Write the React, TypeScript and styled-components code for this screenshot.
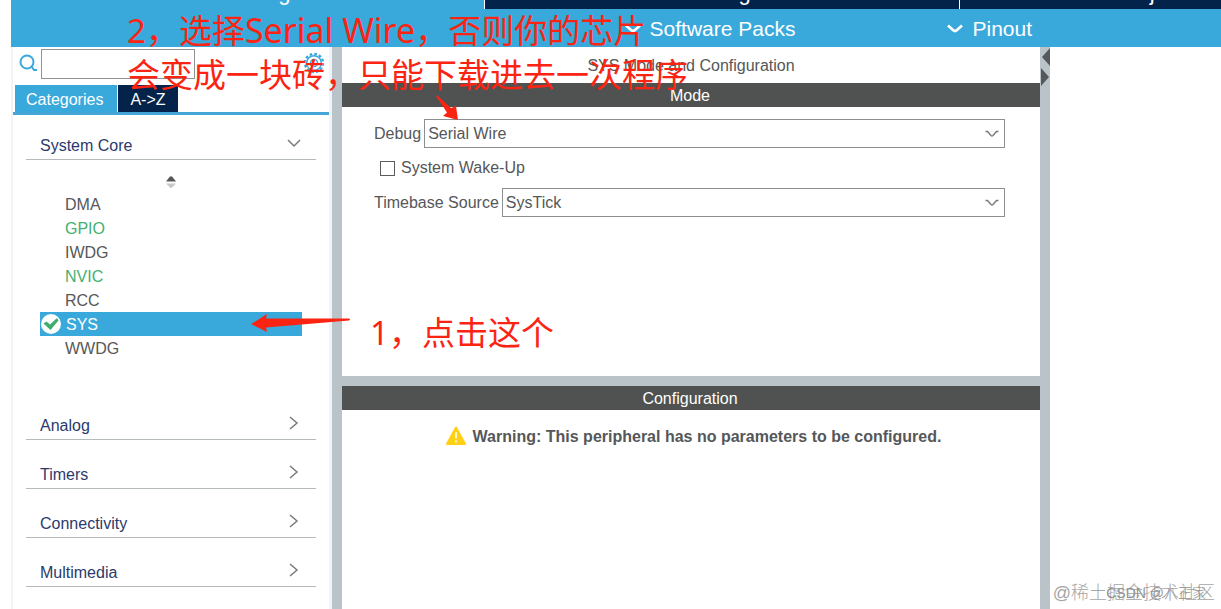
import React from "react";
import styled, { createGlobalStyle } from "styled-components";

const BLUE = "#39a9dc";
const NAVY = "#03234b";
const SPLIT = "#b9c3c8";
const BAR = "#4f5250";
const TEXT = "#555759";
const INK = "#2b3a6b";
const RED = "#fb2412";

const GlobalStyle = createGlobalStyle`
  *, *::before, *::after { box-sizing: border-box; }
  body {
    margin: 0;
    background: #fff;
    color: ${TEXT};
    font: 16px/20px "Liberation Sans", Arial, "Noto Sans CJK SC", sans-serif;
  }
  button, input, select { font: inherit; color: inherit; border-radius: 0; margin: 0; }
  button { border: 0; background: none; padding: 0; cursor: pointer; }
  svg { display: block; flex: none; }
`;

const Page = styled.div`
  position: relative;
  display: flex;
  flex-direction: column;
  min-height: 100vh;
  padding-left: 11px;
  overflow: hidden;
`;

const MainTabs = styled.div`
  display: flex;
  align-items: flex-end;
  height: 9px;
  overflow: hidden;
  background: ${NAVY};
`;

const MainTab = styled.button<{ $active?: boolean }>`
  flex: 0 0 39.2%;
  height: 40px;
  padding: 12px 0 4px;
  font-size: 22px;
  line-height: 24px;
  color: #fff;
  background: ${(p) => (p.$active ? BLUE : NAVY)};
  border-right: 1px solid #fff;
`;

const MenuBar = styled.div`
  display: flex;
  justify-content: flex-end;
  gap: 152px;
  height: 38px;
  padding: 2px 189px 0 0;
  background: ${BLUE};
`;

const MenuButton = styled.button`
  display: flex;
  align-items: center;
  gap: 9px;
  color: #fff;
  font-size: 21px;
  line-height: 24px;
`;

const Workspace = styled.div`
  display: flex;
  flex: 1;
`;

const Sidebar = styled.aside`
  flex: 0 0 321px;
  border-left: 2px solid #f3f3f5;
  border-right: 3px solid #f0f4fa;
`;

const SearchRow = styled.div`
  display: flex;
  align-items: flex-start;
  height: 38px;
  padding: 2px 4px 0 6px;
`;

const SearchIcon = styled.svg`
  margin: 5px 3px 0 0;
`;

const SearchInput = styled.input`
  width: 154px;
  height: 30px;
  border: 1px solid #8f9396;
  background: #fff;
`;

const IconButton = styled.button`
  margin: 3px 0 0 auto;
`;

const ViewTabs = styled.div`
  display: flex;
  gap: 1px;
  padding-left: 2px;
  border-bottom: 3px solid #45a5d6;
`;

const ViewTab = styled.button<{ $active?: boolean }>`
  height: 27px;
  padding: ${(p) => (p.$active ? "2px 14px 0 11px" : "2px 12px 0")};
  color: #fff;
  background: ${(p) => (p.$active ? BLUE : NAVY)};
`;

const Nav = styled.nav`
  display: grid;
  gap: 15px;
  padding: 11px 13px 0;
`;

const Section = styled.section``;

const SectionHeader = styled.button`
  display: flex;
  justify-content: space-between;
  align-items: flex-start;
  width: 100%;
  height: 34px;
  padding: 10px 15px 3px 14px;
  color: ${INK};
  border-bottom: 1px solid #b4b9bc;
`;

const SectionBody = styled.div`
  padding: 16px 14px 31px;
`;

const SortButton = styled.button`
  display: block;
  margin: 0 auto;
  padding: 0 0 4px;
`;

const List = styled.ul`
  list-style: none;
  margin: 0;
  padding: 0;
`;

const Peripheral = styled.button<{ $tone?: "green" | "selected" }>`
  display: flex;
  align-items: center;
  gap: 4px;
  width: 100%;
  height: 24px;
  padding: 2px 0 0 ${(p) => (p.$tone === "selected" ? 0 : 25)}px;
  color: ${(p) => (p.$tone === "selected" ? "#fff" : p.$tone === "green" ? "#43b072" : TEXT)};
  background: ${(p) => (p.$tone === "selected" ? BLUE : "transparent")};

  svg { margin-top: -3px; }
`;

const Splitter = styled.div`
  flex: 0 0 10px;
  background: ${SPLIT};
`;

const Center = styled.main`
  display: flex;
  flex-direction: column;
  flex: 698 1 0;
  min-width: 0;
`;

const RightPane = styled.div`
  flex: 171 1 0;
`;

const Title = styled.h1`
  margin: 0;
  padding: 9px 0 7px;
  font-size: 16px;
  font-weight: 400;
  text-align: center;
`;

const PanelBar = styled.h2`
  margin: 0;
  padding: 3px 2px 1px 0;
  font-size: 16px;
  font-weight: 400;
  text-align: center;
  color: #fff;
  background: ${BAR};
`;

const ModePanel = styled.section`
  min-height: 329px;
`;

const Form = styled.form`
  display: grid;
  gap: 10px;
  padding: 12px 35px 0 32px;
`;

const Field = styled.div`
  display: flex;
  align-items: center;
  gap: 3px;

  label { padding-top: 1px; }
`;

const CheckField = styled.label`
  display: flex;
  align-items: center;
  gap: 6px;
  padding-left: 6px;
  height: 20px;
`;

const Checkbox = styled.input`
  appearance: none;
  width: 15px;
  height: 15px;
  border: 1px solid #5c5c5c;
  background: #fff;
`;

const SelectWrap = styled.div`
  position: relative;
  flex: 1;

  svg {
    position: absolute;
    right: 6px;
    top: 11px;
    pointer-events: none;
  }
`;

const Select = styled.select`
  appearance: none;
  display: block;
  width: 100%;
  height: 29px;
  padding: 1px 24px 0 3px;
  border: 1px solid #8b8f92;
  background: #fff;
`;

const Warning = styled.p`
  display: flex;
  justify-content: center;
  align-items: center;
  gap: 6px;
  margin: 0;
  padding: 17px 0 0 4px;
  font-weight: 700;

  svg { margin-top: -3px; }
`;

const Note = styled.p<{ $x: number; $y: number }>`
  position: absolute;
  left: ${(p) => p.$x}px;
  top: ${(p) => p.$y}px;
  margin: 0;
  color: ${RED};
  font: 33px/44px "Noto Sans", "Noto Sans CJK SC", sans-serif;
  white-space: nowrap;
  pointer-events: none;
`;

const Latin = styled.span`
  font-size: 34px;
  line-height: 1;
`;

const Arrow = styled.svg<{ $x: number; $y: number }>`
  position: absolute;
  left: ${(p) => p.$x}px;
  top: ${(p) => p.$y}px;
  pointer-events: none;
`;

const Watermark = styled.span<{ $small?: boolean }>`
  position: absolute;
  right: ${(p) => (p.$small ? 15 : 6)}px;
  bottom: 5px;
  color: ${(p) => (p.$small ? "#929292" : "#a6a6a6")};
  font: 300 ${(p) => (p.$small ? 14 : 18)}px/22px "Liberation Sans", "Noto Sans CJK SC", sans-serif;
  white-space: nowrap;
  pointer-events: none;
`;

const MenuChevron = () => (
  <svg width="16" height="10" viewBox="0 0 16 10" fill="none" stroke="#fff" strokeWidth="2.6">
    <path d="M1 1.5 L6 6 Q8 8 10 6 L15 1.5" />
  </svg>
);

const ChevronDown = () => (
  <svg width="14" height="9" viewBox="0 0 14 9" fill="none" stroke="#77797b" strokeWidth="1.4">
    <path d="M0.500 1.500 H2.500 L6 5.500 Q7 6.500 8 5.500 L11.500 1.500 H13.500" />
  </svg>
);

const HeaderDown = () => (
  <svg width="14" height="14" viewBox="0 0 14 14" fill="none" stroke="#77797b" strokeWidth="1.5">
    <path d="M1 4 L7 10 L13 4" />
  </svg>
);

const HeaderRight = () => (
  <svg width="14" height="14" viewBox="0 0 14 14" fill="none" stroke="#77797b" strokeWidth="1.5">
    <path d="M3 1 L10 7 L3 13" />
  </svg>
);

const Gear = () => (
  <svg width="22" height="22" viewBox="0 0 22 22" fill="none" stroke={BLUE}>
    <circle cx="11" cy="11" r="9" strokeWidth="2.400" strokeDasharray="2.700 2.012" />
    <circle cx="11" cy="11" r="7.300" strokeWidth="1.400" />
    <circle cx="11" cy="11" r="3.500" strokeWidth="1.400" />
  </svg>
);

const items: { name: string; tone?: "green" | "selected" }[] = [
  { name: "DMA" },
  { name: "GPIO", tone: "green" },
  { name: "IWDG" },
  { name: "NVIC", tone: "green" },
  { name: "RCC" },
  { name: "SYS", tone: "selected" },
  { name: "WWDG" },
];

export default function App() {
  return (
    <Page>
      <GlobalStyle />
      <MainTabs>
        <MainTab $active>Pinout &amp; Configuration</MainTab>
        <MainTab>Clock Configuration</MainTab>
        <MainTab>Project Manager</MainTab>
      </MainTabs>
      <MenuBar>
        <MenuButton><MenuChevron />Software Packs</MenuButton>
        <MenuButton><MenuChevron />Pinout</MenuButton>
      </MenuBar>
      <Workspace>
        <Sidebar>
          <SearchRow>
            <SearchIcon width="19" height="19" viewBox="0 0 19 19" fill="none" stroke={BLUE} strokeWidth="2">
              <circle cx="8" cy="8" r="6.500" />
              <path d="M12.500 12.500 L15 16 H18" />
            </SearchIcon>
            <SearchInput aria-label="Search" />
            <IconButton aria-label="Settings"><Gear /></IconButton>
          </SearchRow>
          <ViewTabs>
            <ViewTab $active>Categories</ViewTab>
            <ViewTab>A-&gt;Z</ViewTab>
          </ViewTabs>
          <Nav>
            <Section>
              <SectionHeader>System Core<HeaderDown /></SectionHeader>
              <SectionBody>
                <SortButton aria-label="Sort">
                  <svg width="12" height="12" viewBox="0 0 12 12">
                    <path d="M1 5.500 L4.500 1 Q6 -0.500 7.500 1 L11 5.500 Z" fill="#55585a" />
                    <path d="M1 7.500 L6 12.500 L11 7.500 Z" fill="#c8c8c8" />
                  </svg>
                </SortButton>
                <List>
                  {items.map((i) => (
                    <li key={i.name}>
                      <Peripheral $tone={i.tone}>
                        {i.tone === "selected" && (
                          <svg width="22" height="22" viewBox="0 0 22 22">
                            <circle cx="11" cy="11" r="10" fill="#fff" />
                            <path d="M3.500 10.500 L6.500 8.500 L10 11.500 L17 5 L18.500 7.500 L10.500 17 Z" fill="#3fae6a" />
                          </svg>
                        )}
                        {i.name}
                      </Peripheral>
                    </li>
                  ))}
                </List>
              </SectionBody>
            </Section>
            {["Analog", "Timers", "Connectivity", "Multimedia"].map((name) => (
              <Section key={name}>
                <SectionHeader>{name}<HeaderRight /></SectionHeader>
              </Section>
            ))}
          </Nav>
        </Sidebar>
        <Splitter />
        <Center>
          <ModePanel>
            <Title>SYS Mode and Configuration</Title>
            <PanelBar>Mode</PanelBar>
            <Form>
              <Field>
                <label htmlFor="debug">Debug</label>
                <SelectWrap>
                  <Select id="debug"><option>Serial Wire</option></Select>
                  <ChevronDown />
                </SelectWrap>
              </Field>
              <CheckField><Checkbox type="checkbox" />System Wake-Up</CheckField>
              <Field>
                <label htmlFor="timebase">Timebase Source</label>
                <SelectWrap>
                  <Select id="timebase"><option>SysTick</option></Select>
                  <ChevronDown />
                </SelectWrap>
              </Field>
            </Form>
          </ModePanel>
          <Splitter />
          <section>
            <PanelBar>Configuration</PanelBar>
            <Warning>
              <svg width="22" height="20" viewBox="0 0 22 20">
                <path d="M11 1.500 L20 18 H2 Z" fill="#ffd014" stroke="#ffd014" strokeWidth="2" strokeLinejoin="round" />
                <path d="M11 6 V12.500 M11 14.500 V16.500" stroke="#fff" strokeWidth="1.600" />
              </svg>
              Warning: This peripheral has no parameters to be configured.
            </Warning>
          </section>
        </Center>
        <Splitter>
          <svg width="10" height="40" viewBox="0 0 10 40" fill="#55585c">
            <path d="M10 1 V19 L2 10 Z M1 21 V39 L9 30 Z" />
          </svg>
        </Splitter>
        <RightPane />
      </Workspace>
      <Note $x={127} $y={9}>2，选择<Latin>Serial Wire</Latin>，否则你的芯片<br />会变成一块砖，只能下载进去一次程序</Note>
      <Note $x={370} $y={311}>1，点击这个</Note>
      <Arrow $x={250} $y={313} width="102" height="20" viewBox="0 0 102 20" fill={RED}>
        <path d="M1 11 L17 1 L16 5.500 L99 5.500 Q101 6.500 99 7.500 L16 14.500 L17 19 Z" />
      </Arrow>
      <Arrow $x={434} $y={94} width="26" height="28" viewBox="0 0 26 28" fill={RED}>
        <path d="M2 2 Q3 1 4 2 L17 14 L22 12 L24 26 L9 22 L13 18.500 Z" />
      </Arrow>
      <Watermark>@稀土掘金技术社区</Watermark>
      <Watermark $small>CSDN @八正家</Watermark>
    </Page>
  );
}
